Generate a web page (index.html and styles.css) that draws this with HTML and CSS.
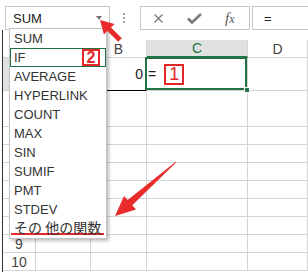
FILE: index.html
```html
<!DOCTYPE html>
<html lang="ja">
<head>
    <meta charset="UTF-8">
    <title>関数の挿入</title>
    <link rel="stylesheet" href="styles.css">
</head>
<body>
    <div class="formula-bar">
        <div class="name-box">SUM<span class="caret"></span></div>
        <div class="splitter"><i></i><i></i><i></i></div>
        <div class="fx-buttons">
            <svg class="btn-cancel" width="9" height="9" viewBox="0 0 9 9"><path d="M0.5 0.5 L8.5 8.5 M8.5 0.5 L0.5 8.5" stroke="#7a7a7a" stroke-width="1.3" fill="none"/></svg>
            <svg class="btn-enter" width="15" height="11" viewBox="0 0 15 11"><path d="M1 5.5 L5 9.5 L14 1" stroke="#7a7a7a" stroke-width="2.6" fill="none"/></svg>
            <span class="btn-fx">f<small>x</small></span>
        </div>
        <div class="formula-input">=</div>
    </div>

    <div class="sheet-wrap">
        <div class="sheet">
            <!-- headers hidden under the dropdown are left empty -->
            <div class="corner"></div><div class="col-head"></div><div class="col-head">B</div><div class="col-head selected">C</div><div class="col-head">D</div>
            <div class="row-head selected"></div><div class="cell"></div><div class="cell num total">0</div><div class="cell active">=<span class="tag tag-1">1</span><b class="frame"></b><b class="handle"></b></div><div class="cell"></div>
            <div class="row-head"></div><div class="cell"></div><div class="cell"></div><div class="cell"></div><div class="cell"></div>
            <div class="row-head"></div><div class="cell"></div><div class="cell"></div><div class="cell"></div><div class="cell"></div>
            <div class="row-head"></div><div class="cell"></div><div class="cell"></div><div class="cell"></div><div class="cell"></div>
            <div class="row-head"></div><div class="cell"></div><div class="cell"></div><div class="cell"></div><div class="cell"></div>
            <div class="row-head"></div><div class="cell"></div><div class="cell"></div><div class="cell"></div><div class="cell"></div>
            <div class="row-head"></div><div class="cell"></div><div class="cell"></div><div class="cell"></div><div class="cell"></div>
            <div class="row-head"></div><div class="cell"></div><div class="cell"></div><div class="cell"></div><div class="cell"></div>
            <div class="row-head">9</div><div class="cell"></div><div class="cell"></div><div class="cell"></div><div class="cell"></div>
            <div class="row-head">10</div><div class="cell"></div><div class="cell"></div><div class="cell"></div><div class="cell"></div>
        </div>
    </div>

    <ul class="fn-list">
        <li>SUM</li>
        <li class="current">IF<span class="tag tag-2">2</span></li>
        <li>AVERAGE</li>
        <li>HYPERLINK</li>
        <li>COUNT</li>
        <li>MAX</li>
        <li>SIN</li>
        <li>SUMIF</li>
        <li>PMT</li>
        <li>STDEV</li>
        <li class="more"><span>その 他の関数</span></li>
    </ul>

    <svg class="arrows" width="308" height="272" viewBox="0 0 308 272">
        <polygon points="100,20 114.5,23.9 111,27.4 121.8,38.2 118.2,41.8 107.4,31 103.9,34.5" fill="#ea2b2b"/>
        <polygon points="115,216 124,196 127.7,200.1 175.7,161.7 176.3,162.3 132.3,205.3 136,209.4" fill="#ea2b2b"/>
    </svg>
</body>
</html>
```

FILE: styles.css
```css
* {
    box-sizing: border-box;
}
body {
    margin: 0;
    width: 308px;
    height: 272px;
    overflow: hidden;
    position: relative;
    background: #fff;
    font-family: "Liberation Sans", Arial, sans-serif;
    color: #222;
}

/* formula bar */
.formula-bar {
    display: flex;
    align-items: flex-start;
    height: 30px;
    padding-top: 6px;
}
.name-box {
    display: flex;
    align-items: center;
    margin-left: 5px;
    width: 105px;
    height: 24px;
    padding-left: 7px;
    border: 1px solid #c6c6c6;
    font-size: 13px;
}
.caret {
    margin-left: auto;
    margin-right: 7px;
    width: 0;
    border-left: 3px solid transparent;
    border-right: 3px solid transparent;
    border-top: 4px solid #777;
}
.splitter {
    display: flex;
    flex-direction: column;
    gap: 2px;
    margin-left: 13px;
    padding-top: 7px;
}
.splitter i {
    width: 2px;
    height: 2px;
    background: #a0a0a0;
}
.fx-buttons {
    display: flex;
    align-items: center;
    margin-left: 15px;
    width: 110px;
    height: 24px;
    border: 1px solid #c6c6c6;
}
.btn-cancel {
    margin-left: 13px;
}
.btn-enter {
    margin-left: 24px;
}
.btn-fx {
    margin-left: 23px;
    font-family: "Liberation Serif", serif;
    font-style: italic;
    font-size: 15px;
    color: #555;
}
.btn-fx small {
    font-size: 12px;
}
.formula-input {
    flex: 1;
    display: flex;
    align-items: center;
    margin-left: 2px;
    height: 24px;
    padding-left: 11px;
    border: 1px solid #c6c6c6;
    border-right: none;
    font-size: 13px;
}

/* sheet */
.sheet-wrap {
    margin-left: 2px;
    padding-top: 10px;
    border-left: 1px solid #333;
    height: 242px;
}
.sheet {
    display: grid;
    grid-template-columns: 33px 55px 56px 101px 1fr;
    grid-template-rows: 18px 33px 36px repeat(8, 18px);
}
.sheet > div {
    display: flex;
    align-items: center;
    border-right: 1px solid #d4d4d4;
    border-bottom: 1px solid #d4d4d4;
    font-size: 14px;
}
.col-head,
.row-head {
    justify-content: center;
    font-size: 12px;
    color: #444;
}
.col-head.selected {
    background: #e1e1e1;
    border-bottom: 2px solid #217346;
    color: #217346;
}
.row-head.selected {
    background: #e1e1e1;
    border-right: 2px solid #217346;
}
.cell.num {
    justify-content: flex-end;
    padding-right: 3px;
}
.cell.total {
    border-bottom-color: #000;
}
.cell.active {
    position: relative;
    padding-left: 1px;
}
.frame {
    position: absolute;
    left: -2px;
    top: -1px;
    right: 0;
    bottom: 0;
    border: 2px solid #217346;
}
.handle {
    position: absolute;
    right: -3px;
    bottom: -3px;
    width: 6px;
    height: 6px;
    background: #217346;
    border: 1px solid #fff;
}

/* red callouts */
.tag {
    display: flex;
    align-items: center;
    justify-content: center;
    border: 2px solid #e52626;
    color: #e52626;
    background: #fff;
}
.tag-1 {
    margin-left: 8px;
    width: 20px;
    height: 21px;
    font-size: 18px;
}
.tag-2 {
    margin-left: auto;
    margin-right: 5px;
    width: 18px;
    height: 17px;
    font-size: 16px;
    font-weight: bold;
}

/* function dropdown */
.fn-list {
    position: absolute;
    left: 9px;
    top: 28px;
    width: 98px;
    margin: 0;
    padding: 0;
    list-style: none;
    background: #fff;
    border: 1px solid #c2c2c2;
    box-shadow: 2px 2px 3px rgba(0, 0, 0, 0.25);
    font-size: 13px;
    color: #333;
}
.fn-list li {
    display: flex;
    align-items: center;
    height: 19px;
    padding-left: 4px;
}
.fn-list li.current {
    border: 1px solid #217346;
    padding-left: 3px;
}
.fn-list li.more {
    align-items: flex-start;
    padding-left: 0;
}
.fn-list li.more span {
    flex: 1;
    margin: 0 2px 0 1px;
    padding-left: 3px;
    height: 16px;
    border-bottom: 2px solid #e52626;
    font-family: "Noto Sans CJK JP", sans-serif;
    font-size: 14px;
    line-height: 14px;
    padding-top: 1px;
}

.arrows {
    position: absolute;
    left: 0;
    top: 0;
    pointer-events: none;
}
```
